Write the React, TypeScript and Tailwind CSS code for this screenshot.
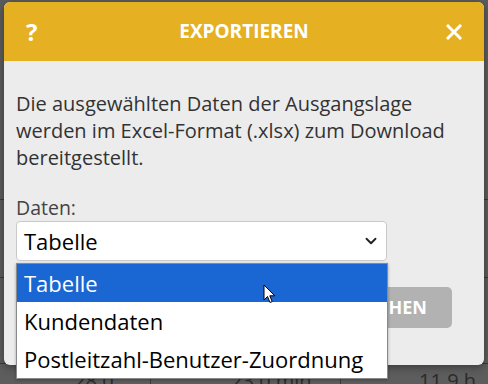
import { ChevronDown } from "lucide-react";

const options = ["Tabelle", "Kundendaten", "Postleitzahl-Benutzer-Zuordnung"];

function Cursor() {
  return (
    <svg width="14" height="21" viewBox="0 0 14 21" className="absolute left-[263px] top-[284px]">
      <path
        d="M1 1 L1 16 L4.5 12.5 L7 18.5 L9.2 17.6 L6.8 11.8 L11.8 11.8 Z"
        fill="#fff"
        stroke="#000"
        strokeWidth="1"
        strokeLinejoin="round"
      />
    </svg>
  );
}

export default function App() {
  return (
    <div className="relative w-[488px] h-[384px] overflow-hidden bg-[#5d5d5d] font-['Open_Sans',sans-serif]">
      {/* dimmed page behind the dialog */}
      <div className="flex flex-col">
        <div className="h-[200px] border-b border-[#3a3a3a]" />
        <div className="h-[78px] border-b border-[#3a3a3a]" />
        <div className="h-[86px] border-b border-[#3a3a3a]" />
        <div className="grid grid-cols-[150px_190px_148px] h-[19px] text-[20px] leading-[24px] text-[#2b2b2b]">
          <div className="pl-[74px] pt-[5px]">28.0</div>
          <div className="pl-[80px] pt-[5px] border-l border-[#3a3a3a]">23.0 min</div>
          <div className="pl-[78px] pt-[5px] border-l border-[#3a3a3a]">11.9 h</div>
        </div>
      </div>

      {/* dialog */}
      <div className="absolute left-[4px] top-[2px] w-[480px] h-[363px] rounded-[6px] bg-[#ececec] shadow-[0_2px_8px_rgba(0,0,0,0.4)] overflow-hidden">
        <div className="h-[59px] bg-[#e5b022] flex items-center justify-between px-[22px] text-white">
          <span className="w-[16px] text-[24px] font-bold leading-none">?</span>
          <span className="text-[19px] font-bold">EXPORTIEREN</span>
          <svg width="16" height="16" viewBox="0 0 16 16">
            <path d="M2 2 L14 14 M14 2 L2 14" stroke="#fff" strokeWidth="3" strokeLinecap="square" />
          </svg>
        </div>
        <div className="px-[12px] pt-[29px]">
          <p className="text-[20px] leading-[27px] text-[#333]">
            Die ausgewählten Daten der Ausgangslage
            <br />
            werden im Excel-Format (.xlsx) zum Download
            <br />
            bereitgestellt.
          </p>
          <div className="mt-[23px] text-[19.5px] leading-[27px] text-[#444]">Daten:</div>
          <div className="w-[371px] h-[40px] rounded-[4px] border border-[#c9c9c9] bg-white flex items-center justify-between pl-[7px] pr-[6px]">
            <span className="text-[22px] text-black">Tabelle</span>
            <ChevronDown size={18} strokeWidth={2.5} color="#222" />
          </div>
          <div className="mt-[26px] flex justify-end pr-[20px]">
            <div className="h-[41px] rounded-[5px] bg-[#b2b2b2] px-[25px] flex items-center text-[18px] font-bold text-white">
              ABBRECHEN
            </div>
          </div>
        </div>
      </div>

      {/* open select list */}
      <div className="absolute left-[16px] top-[263px] w-[372px] border border-[#8a8a8a] bg-white shadow-[0_1px_3px_rgba(0,0,0,0.3)]">
        {options.map((o, i) => (
          <div
            key={o}
            className={
              i === 0
                ? "h-[38px] pl-[7px] flex items-center text-[22px] bg-[#1a66d2] text-white"
                : "h-[38px] pl-[7px] flex items-center text-[22px] text-black"
            }
          >
            {o}
          </div>
        ))}
      </div>

      <Cursor />
    </div>
  );
}
